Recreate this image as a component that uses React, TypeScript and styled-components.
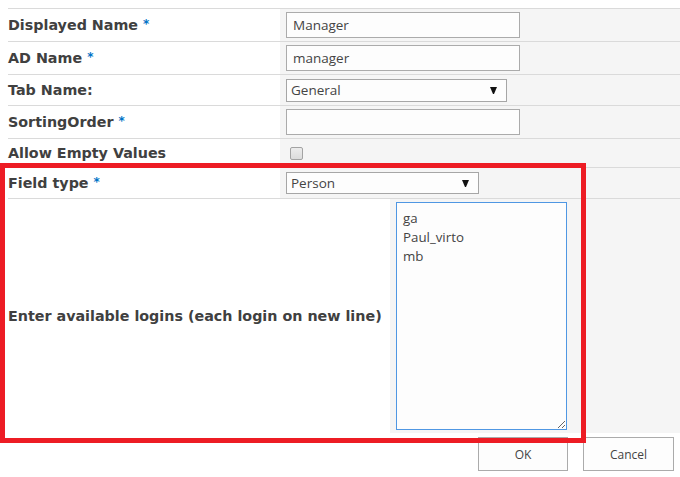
import React from "react";
import styled, { createGlobalStyle } from "styled-components";

const GlobalStyle = createGlobalStyle`
  html, body { margin: 0; padding: 0; background: #ffffff; }
  * { box-sizing: border-box; }
`;

const Page = styled.div`
  position: relative;
  width: 680px;
  height: 477px;
  padding: 8px 0 0 8px;
  background: #ffffff;
  overflow: hidden;
`;

const FormTable = styled.div`
  display: flex;
  flex-direction: column;
  border-top: 1px solid #dadada;
`;

const Row = styled.div<{ $label: number; $h: number; $last?: boolean }>`
  display: grid;
  grid-template-columns: ${(p) => p.$label}px 1fr;
  height: ${(p) => p.$h + (p.$last ? 0 : 1)}px;
  border-bottom: ${(p) => (p.$last ? "none" : "1px solid #dadada")};
`;

const LabelCell = styled.div`
  display: flex;
  align-items: center;
  font-family: "DejaVu Sans", Verdana, sans-serif;
  font-weight: bold;
  font-size: 14.3px;
  color: #404040;
  white-space: nowrap;
`;

const Req = styled.span`
  color: #0072c6;
  font-size: 12px;
  margin-left: 5px;
  position: relative;
  top: -1px;
`;

const ValueCell = styled.div`
  display: flex;
  align-items: center;
  padding-left: 6px;
  background: #f5f5f5;
`;

const TextInput = styled.div<{ $w: number }>`
  width: ${(p) => p.$w}px;
  height: 26px;
  border: 1px solid #ababab;
  background: #fdfdfd;
  padding: 0 6px;
  display: flex;
  align-items: center;
  font-family: "Open Sans", "Noto Sans", sans-serif;
  font-size: 13.5px;
  color: #444444;
`;

const Select = styled.div<{ $w: number; $h: number }>`
  width: ${(p) => p.$w}px;
  height: ${(p) => p.$h}px;
  border: 1px solid #a6a6a6;
  background: #fdfdfd;
  padding: 0 9px 0 4px;
  display: flex;
  align-items: center;
  justify-content: space-between;
  font-family: "Open Sans", "Noto Sans", sans-serif;
  font-size: 13.5px;
  color: #444444;
`;

const Checkbox = styled.span`
  display: inline-block;
  width: 13px;
  height: 13px;
  margin-left: 4px;
  border: 1px solid #a3a3a3;
  border-radius: 2px;
  background: linear-gradient(#ececec, #dcdcdc);
`;

const TextArea = styled.textarea`
  width: 171px;
  height: 228px;
  margin-left: 0;
  padding: 6px 6px;
  border: 1px solid #4f97e3;
  border-radius: 0;
  outline: none;
  background: #fdfdfd;
  font-family: "Open Sans", "Noto Sans", sans-serif;
  font-size: 13.3px;
  line-height: 19px;
  color: #444444;
  resize: both;
`;

const TallValueCell = styled(ValueCell)`
  align-items: flex-start;
  padding-top: 3px;
`;

const ButtonBar = styled.div`
  display: flex;
  justify-content: flex-end;
  gap: 15px;
  margin-top: 4px;
  padding-right: 6px;
`;

const Button = styled.button<{ $w: number }>`
  width: ${(p) => p.$w}px;
  height: 34px;
  border: 1px solid #ababab;
  background: #fdfdfd;
  font-family: "Open Sans", "Noto Sans", sans-serif;
  font-size: 12px;
  color: #444444;
  padding: 0;
`;

const Highlight = styled.div`
  position: absolute;
  left: 0;
  top: 163px;
  width: 586px;
  height: 280px;
  border: 5px solid #ed1c24;
  pointer-events: none;
`;

const Arrow = () => (
  <svg width="7" height="7" viewBox="0 0 7 7">
    <polygon points="0,0 7,0 4,7 3,7" fill="#111" />
  </svg>
);

export default function App() {
  return (
    <>
      <GlobalStyle />
      <Page>
        <FormTable>
          <Row $label={272} $h={32}>
            <LabelCell>
              Displayed Name<Req>*</Req>
            </LabelCell>
            <ValueCell>
              <TextInput $w={234}>Manager</TextInput>
            </ValueCell>
          </Row>
          <Row $label={272} $h={32}>
            <LabelCell>
              AD Name<Req>*</Req>
            </LabelCell>
            <ValueCell>
              <TextInput $w={234}>manager</TextInput>
            </ValueCell>
          </Row>
          <Row $label={272} $h={30}>
            <LabelCell>Tab Name:</LabelCell>
            <ValueCell>
              <Select $w={221} $h={23}>
                General
                <Arrow />
              </Select>
            </ValueCell>
          </Row>
          <Row $label={272} $h={32}>
            <LabelCell>
              SortingOrder<Req>*</Req>
            </LabelCell>
            <ValueCell>
              <TextInput $w={234} />
            </ValueCell>
          </Row>
          <Row $label={272} $h={28}>
            <LabelCell>Allow Empty Values</LabelCell>
            <ValueCell>
              <Checkbox />
            </ValueCell>
          </Row>
          <Row $label={272} $h={30}>
            <LabelCell>
              Field type<Req>*</Req>
            </LabelCell>
            <ValueCell>
              <Select $w={193} $h={22}>
                Person
                <Arrow />
              </Select>
            </ValueCell>
          </Row>
          <Row $label={382} $h={234} $last>
            <LabelCell>Enter available logins (each login on new line)</LabelCell>
            <TallValueCell>
              <TextArea readOnly defaultValue={"ga\nPaul_virto\nmb"} />
            </TallValueCell>
          </Row>
        </FormTable>
        <ButtonBar>
          <Button $w={90}>OK</Button>
          <Button $w={91}>Cancel</Button>
        </ButtonBar>
        <Highlight />
      </Page>
    </>
  );
}
